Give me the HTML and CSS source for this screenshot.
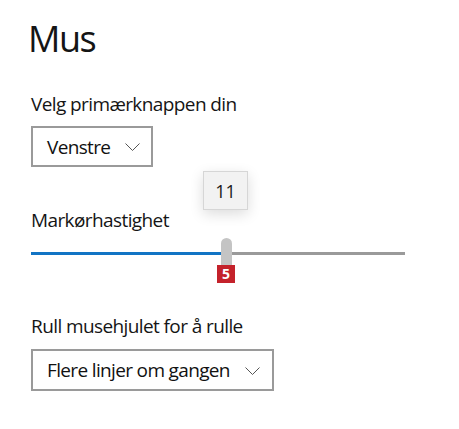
FILE: index.html
```html
<!DOCTYPE html>
<html lang="nb">
<head>
<meta charset="utf-8">
<title>Mus</title>
<link rel="stylesheet" href="styles.css">
</head>
<body>
<main class="page">
  <h1 class="title">Mus</h1>

  <div class="label label-first">Velg primærknappen din</div>
  <div class="dropdown dropdown-short">
    <span class="dropdown-text">Venstre</span>
    <svg class="chevron" width="15" height="8" viewBox="0 0 15 8"><polyline points="0.5,0.5 7.5,7.5 14.5,0.5" fill="none" stroke="#555" stroke-width="1"/></svg>
  </div>

  <div class="label label-speed">Markørhastighet</div>
  <div class="slider">
    <div class="track-fill"></div>
    <div class="thumb"></div>
    <div class="track-rest"></div>
    <div class="tooltip">11</div>
    <div class="badge">5</div>
  </div>

  <div class="label label-scroll">Rull musehjulet for å rulle</div>
  <div class="dropdown dropdown-long">
    <span class="dropdown-text">Flere linjer om gangen</span>
    <svg class="chevron" width="15" height="8" viewBox="0 0 15 8"><polyline points="0.5,0.5 7.5,7.5 14.5,0.5" fill="none" stroke="#555" stroke-width="1"/></svg>
  </div>
</main>
</body>
</html>
```

FILE: styles.css
```css
html, body {
  margin: 0;
  padding: 0;
  background: #ffffff;
}

body {
  font-family: "Open Sans", "Noto Sans", sans-serif;
  color: #111111;
}

.page {
  padding: 0 0 0 31px;
  display: flex;
  flex-direction: column;
  align-items: flex-start;
}

.title {
  margin: 17px 0 0 -3px;
  font-size: 36px;
  line-height: 44px;
  font-weight: 400;
  letter-spacing: -1.5px;
  color: #151515;
}

.label {
  font-size: 19px;
  line-height: 24px;
  letter-spacing: -0.6px;
  color: #151515;
}

.label-first {
  margin-top: 31px;
}

.label-speed {
  margin-top: 41px;
}

.label-scroll {
  margin-top: 46px;
}

.dropdown {
  box-sizing: border-box;
  height: 41px;
  border: 2px solid #9a9a9a;
  display: flex;
  align-items: center;
  gap: 15px;
  padding: 0 11px 0 14px;
  margin-top: 10px;
  background: #ffffff;
}

.dropdown-long {
  height: 42px;
  margin-top: 11px;
  padding-right: 12px;
}

.dropdown-text {
  font-size: 19px;
  letter-spacing: -0.65px;
  color: #111111;
}

.chevron {
  display: block;
  margin-top: 1px;
}

.slider {
  position: relative;
  margin-top: 6px;
  height: 30px;
  width: 374px;
  display: flex;
  align-items: center;
}

.track-fill {
  width: 190px;
  height: 3px;
  background: #1274c4;
}

.thumb {
  width: 11px;
  height: 30px;
  border-radius: 6px 6px 0 0;
  background: #c4c4c4;
}

.track-rest {
  flex: 1;
  height: 3px;
  background: #9a9a9a;
}

.tooltip {
  position: absolute;
  left: 172px;
  top: -67px;
  box-sizing: border-box;
  width: 45px;
  height: 39px;
  background: #f2f2f2;
  border: 1px solid #d6d6d6;
  box-shadow: 0 4px 14px rgba(0, 0, 0, 0.14);
  display: flex;
  align-items: center;
  justify-content: center;
  font-size: 18px;
  color: #1a1a1a;
}

.badge {
  position: absolute;
  left: 186px;
  top: 27px;
  width: 18px;
  height: 18px;
  background: #c4222b;
  color: #ffffff;
  font-weight: 700;
  font-size: 14px;
  line-height: 18px;
  text-align: center;
}
```
